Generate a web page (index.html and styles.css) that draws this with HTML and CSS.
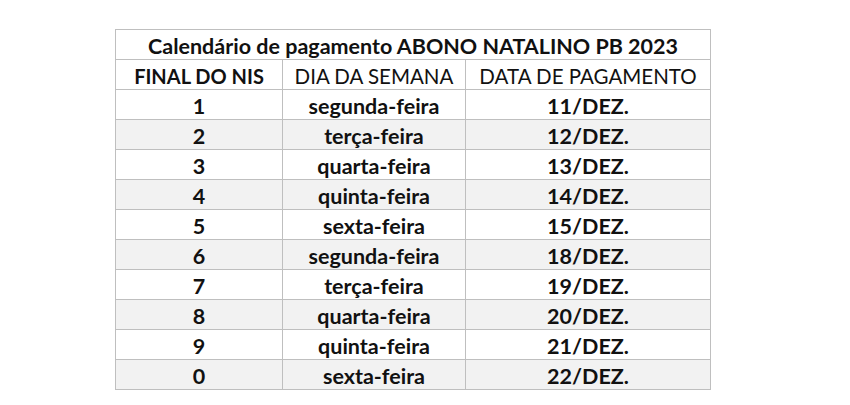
FILE: index.html
```html
<!DOCTYPE html>
<html lang="pt-BR">
<head>
<meta charset="utf-8">
<title>Calendário ABONO NATALINO PB 2023</title>
<link rel="stylesheet" href="styles.css">
</head>
<body>
<table class="cal">
  <colgroup>
    <col class="c1"><col class="c2"><col class="c3">
  </colgroup>
  <thead>
    <tr class="title"><th colspan="3">Calendário de pagamento ABONO NATALINO PB 2023</th></tr>
    <tr class="head"><th class="b">FINAL DO NIS</th><th>DIA DA SEMANA</th><th>DATA DE PAGAMENTO</th></tr>
  </thead>
  <tbody>
    <tr><td>1</td><td>segunda-feira</td><td>11/DEZ.</td></tr>
    <tr><td>2</td><td>terça-feira</td><td>12/DEZ.</td></tr>
    <tr><td>3</td><td>quarta-feira</td><td>13/DEZ.</td></tr>
    <tr><td>4</td><td>quinta-feira</td><td>14/DEZ.</td></tr>
    <tr><td>5</td><td>sexta-feira</td><td>15/DEZ.</td></tr>
    <tr><td>6</td><td>segunda-feira</td><td>18/DEZ.</td></tr>
    <tr><td>7</td><td>terça-feira</td><td>19/DEZ.</td></tr>
    <tr><td>8</td><td>quarta-feira</td><td>20/DEZ.</td></tr>
    <tr><td>9</td><td>quinta-feira</td><td>21/DEZ.</td></tr>
    <tr><td>0</td><td>sexta-feira</td><td>22/DEZ.</td></tr>
  </tbody>
</table>
</body>
</html>
```
FILE: styles.css
```css
html, body {
  margin: 0;
  padding: 0;
  background: #ffffff;
}
body {
  padding: 29px 0 0 115px;
  font-family: "Lato", "Open Sans", sans-serif;
  color: #111111;
}
.cal {
  border-collapse: collapse;
  table-layout: fixed;
  width: 595px;
}
.c1 { width: 167px; }
.c2 { width: 183px; }
.c3 { width: 245px; }
.cal th, .cal td {
  border: 1px solid #bfbfbf;
  height: 27px;
  padding: 2px 0 0;
  text-align: center;
  vertical-align: middle;
  font-size: 21.5px;
  line-height: 24px;
  white-space: nowrap;
  overflow: hidden;
}
.cal td {
  font-weight: 700;
}
.title th {
  font-weight: 700;
  font-size: 21.5px;
}
.head th {
  font-weight: 400;
  font-size: 20.5px;
}
.head th.b {
  font-weight: 700;
  font-size: 20px;
}
.cal tbody tr:nth-child(even) td {
  background: #f2f2f2;
}
```
